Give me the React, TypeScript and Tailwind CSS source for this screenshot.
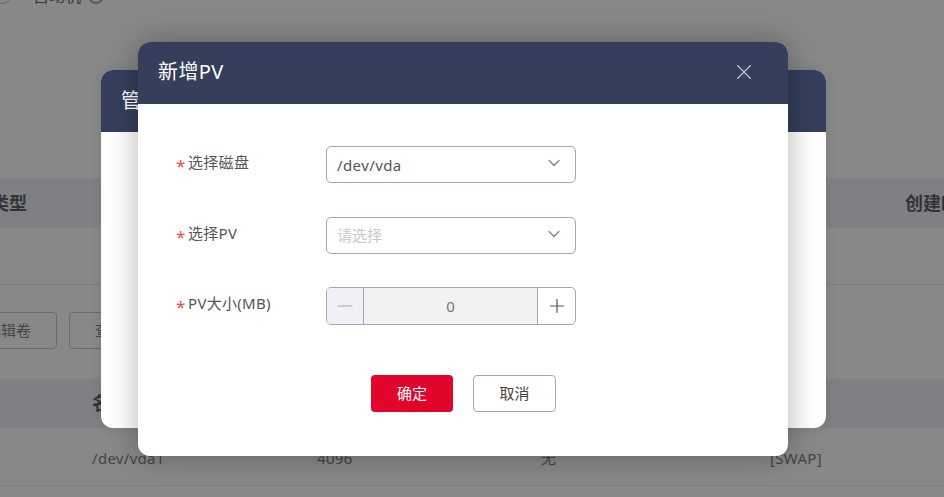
import React from 'react';
import { ChevronDown, X, Minus, Plus } from 'lucide-react';

const font = "font-['Noto_Sans','Noto_Sans_CJK_SC',sans-serif]";

const Field = ({ label, children }: { label: string; children: React.ReactNode }) => (
  <div className="flex items-start">
    <label className="w-[150px] flex items-center h-[33px] text-[15px] tracking-[0.3px] text-[#555]">
      <span className="w-3 text-[#f5484d] text-[17px] leading-none pt-[6px]">*</span>
      {label}
    </label>
    {children}
  </div>
);

const Select = ({ value, placeholder }: { value?: string; placeholder?: string }) => (
  <div className="w-[250px] h-[37px] border border-[#a3a6b4] rounded-[5px] flex items-center justify-between pl-[10px] pr-[11px] text-[15px]">
    {value ? (
      <span className="text-[#555] tracking-[0.4px] pt-[2px]">{value}</span>
    ) : (
      <span className="text-[#c8c9cf]">{placeholder}</span>
    )}
    <ChevronDown size={20} strokeWidth={1.5} className="text-[#7c8093] -mt-[3px]" />
  </div>
);

const App = () => {
  return (
    <div className={`relative h-[497px] w-[944px] overflow-hidden bg-[#888888] text-[#333] ${font}`}>
      {/* page behind the dialogs */}
      <div className="flex items-center h-[4px] text-[16px] text-[#3a3a3a] -ml-[8px]">
        <span className="w-[20px] h-[20px] rounded-full border border-[#666] shrink-0 -mt-[16px]" />
        <span className="w-[21px]" />
        <span className="leading-none -mt-[12px]">自动机</span>
        <span className="ml-[7px] w-[16px] h-[16px] rounded-full border-2 border-[#5c5c5c] -mt-[12px]" />
      </div>
      <div className="mt-[174px] h-[50px] bg-[#7f8085] flex items-center justify-between font-bold text-[18px] text-[#333]">
        <span className="-ml-[9px]">类型</span>
        <span className="w-[39px] whitespace-nowrap">创建时间</span>
      </div>
      <div className="h-[57px] border-b border-[#7c7c7c]" />
      <div className="flex gap-3 mt-[27px] h-[37px] -ml-[40px] text-[15px] text-[#444]">
        <div className="w-[97px] rounded border border-[#6a6a70] flex items-center justify-center">编辑卷</div>
        <div className="w-[97px] rounded border border-[#6a6a70] flex items-center pl-[25px]">查看</div>
      </div>
      <div className="mt-[30px] h-[49px] bg-[#7f8085] flex items-center pl-[92px] font-bold text-[18px]">名称</div>
      <div className="h-[58px] border-b border-[#7c7c7c] relative text-[15px] tracking-[0.3px] text-[#444]">
        <div className="grid grid-cols-[225px_224px_229px_100px] ml-[92px] pt-[19px]">
          <span>/dev/vda1</span>
          <span>4096</span>
          <span>无</span>
          <span>[SWAP]</span>
        </div>
      </div>

      {/* first dialog, underneath */}
      <div className="absolute left-[101px] top-[70px] w-[725px] h-[358px] rounded-xl bg-white overflow-hidden shadow-[0_0_12px_rgba(0,0,0,0.1)]">
        <div className="h-[62px] bg-[#353f5b] text-white text-[20px] pl-[20px] flex items-center">管理</div>
      </div>

      {/* second dialog */}
      <div className="absolute left-[138px] top-[42px] w-[650px] h-[414px] rounded-xl bg-white overflow-hidden shadow-[0_0_30px_rgba(0,0,0,0.3)]">
        <div className="h-[62px] bg-[#353f5b] text-white text-[20px] pl-[20px] pr-[31px] flex items-center justify-between">
          <span className="tracking-[0.4px] -mt-[2px]">新增PV</span>
          <X size={26} strokeWidth={1} className="text-[#c3c8d6] -mt-[3px]" />
        </div>
        <div className="pl-[38px] pt-[42px] flex flex-col">
          <Field label="选择磁盘">
            <Select value="/dev/vda" />
          </Field>
          <div className="mt-[34px]">
            <Field label="选择PV">
              <Select placeholder="请选择" />
            </Field>
          </div>
          <div className="mt-[33px]">
            <Field label="PV大小(MB)">
              <div className="w-[250px] h-[38px] border border-[#a3a6b4] rounded-[5px] flex overflow-hidden">
                <div className="w-[37px] bg-[#eff0f5] border-r border-[#a3a6b4] flex items-center justify-center">
                  <Minus size={24} strokeWidth={1.2} className="text-[#a8a8a8]" />
                </div>
                <div className="flex-1 bg-[#f2f2f3] flex items-center justify-center text-[15px] text-[#777]">0</div>
                <div className="w-[38px] border-l border-[#a3a6b4] flex items-center justify-center">
                  <Plus size={22} strokeWidth={1.3} className="text-[#555]" />
                </div>
              </div>
            </Field>
          </div>
        </div>
        <div className="flex justify-center gap-[20px] mt-[50px] text-[15px] ml-[1px]">
          <button className="w-[82px] h-[37px] rounded bg-[#e1052b] text-white">确定</button>
          <button className="w-[83px] h-[37px] rounded border border-[#a3a6b4] text-[#444]">取消</button>
        </div>
      </div>
    </div>
  );
};

export default App;
